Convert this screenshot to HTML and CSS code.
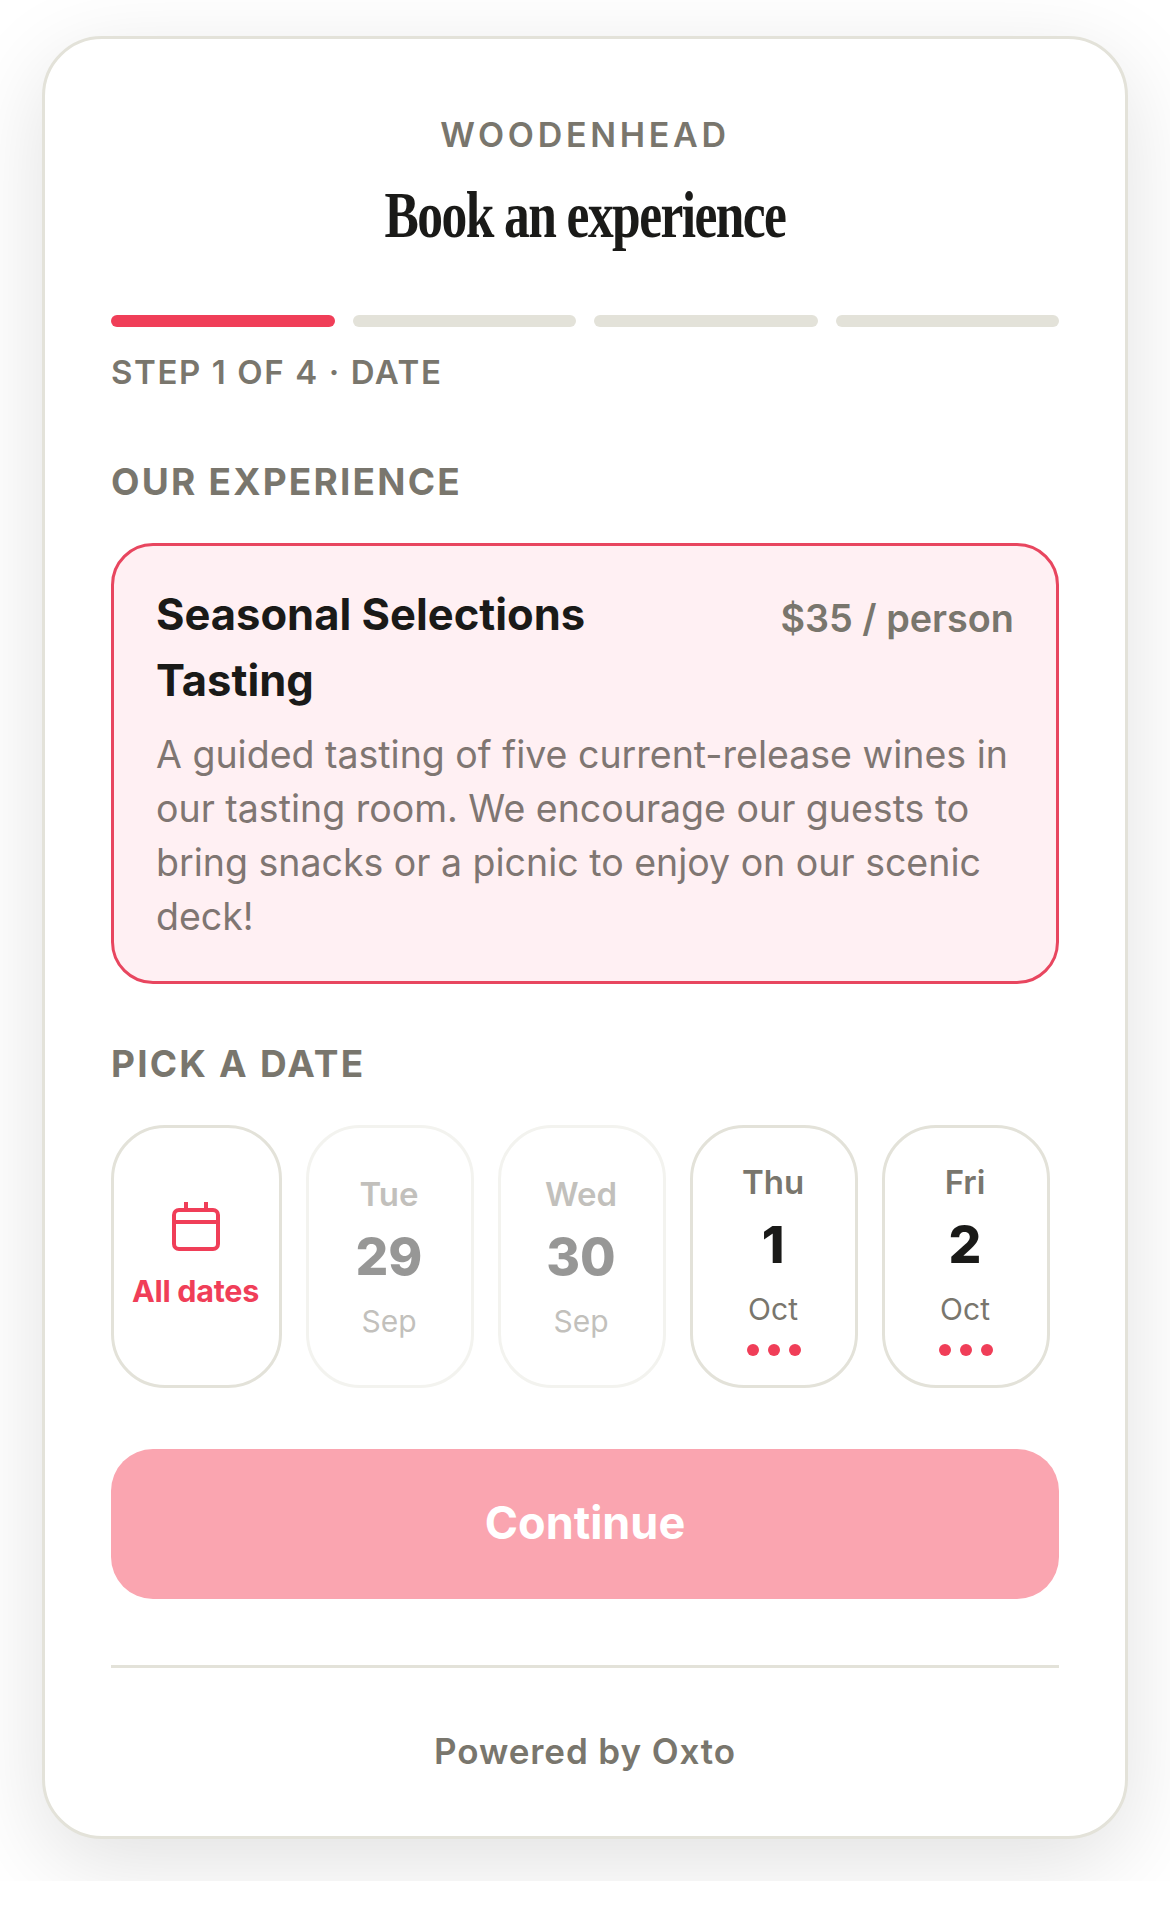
FILE: index.html
```html
<!DOCTYPE html>
<html lang="en">
<head>
    <meta charset="UTF-8">
    <title>Book an experience</title>
    <link rel="stylesheet" href="styles.css">
</head>
<body>
    <div class="stage">
        <main class="booking">
            <header class="brand">
                <p class="brand-name">WOODENHEAD</p>
                <h1 class="brand-title">Book an experience</h1>
            </header>

            <div class="progress">
                <span class="progress-bar active"></span>
                <span class="progress-bar"></span>
                <span class="progress-bar"></span>
                <span class="progress-bar"></span>
            </div>
            <p class="step-label">STEP 1 OF 4 · DATE</p>

            <h2 class="section-label">OUR EXPERIENCE</h2>
            <section class="experience">
                <div class="experience-head">
                    <h3 class="experience-name">Seasonal Selections Tasting</h3>
                    <span class="experience-price">$35 / person</span>
                </div>
                <p class="experience-text">A guided tasting of five current-release wines in our tasting room. We encourage our guests to bring snacks or a picnic to enjoy on our scenic deck!</p>
            </section>

            <h2 class="section-label date-label">PICK A DATE</h2>
            <div class="dates">
                <button class="date date-all" type="button">
                    <svg class="date-icon" viewBox="0 0 48 50" fill="none" stroke="currentColor" stroke-width="4" stroke-linejoin="round">
                        <rect x="2" y="9" width="44" height="39" rx="5"/>
                        <path d="M2 21h44M14 1v8M34 1v8"/>
                    </svg>
                    <span class="date-all-text">All dates</span>
                </button>
                <button class="date disabled" type="button">
                    <span class="date-day">Tue</span>
                    <span class="date-num">29</span>
                    <span class="date-month">Sep</span>
                </button>
                <button class="date disabled" type="button">
                    <span class="date-day">Wed</span>
                    <span class="date-num">30</span>
                    <span class="date-month">Sep</span>
                </button>
                <button class="date" type="button">
                    <span class="date-day">Thu</span>
                    <span class="date-num">1</span>
                    <span class="date-month">Oct</span>
                    <span class="dots"><i></i><i></i><i></i></span>
                </button>
                <button class="date" type="button">
                    <span class="date-day">Fri</span>
                    <span class="date-num">2</span>
                    <span class="date-month">Oct</span>
                    <span class="dots"><i></i><i></i><i></i></span>
                </button>
            </div>

            <button class="continue" type="button">Continue</button>

            <footer class="powered">Powered by Oxto</footer>
        </main>
    </div>
</body>
</html>
```

FILE: styles.css
```css
* {
    box-sizing: border-box;
}

body {
    margin: 0;
    background-color: #fff;
    font-family: 'Inter', sans-serif;
    color: #1a1a18;
}

h1, h2, h3, p {
    margin: 0;
}

.stage {
    height: 1881px;
    padding: 36px 42px 0;
    overflow: hidden;
    background-color: #fff;
}

.booking {
    height: 1803px;
    padding: 76px 66px 0;
    background-color: #fff;
    border: 3px solid #e3e2d9;
    border-radius: 60px;
    box-shadow: 0 24px 90px rgba(0, 0, 0, 0.12);
}

.brand {
    text-align: center;
}

.brand-name {
    font-size: 34px;
    line-height: 40px;
    font-weight: 600;
    letter-spacing: 3.7px;
    color: #79766d;
}

.brand-title {
    display: inline-block;
    margin-top: 20px;
    font-family: 'Liberation Serif', serif;
    font-size: 66px;
    line-height: 80px;
    font-weight: 700;
    letter-spacing: -2px;
    color: #1a1a18;
    transform: scaleX(0.78);
}

.progress {
    display: flex;
    gap: 18px;
    margin-top: 60px;
}

.progress-bar {
    flex: 1;
    height: 12px;
    background-color: #e3e2d9;
    border-radius: 6px;
}

.progress-bar.active {
    background-color: #f03e58;
}

.step-label {
    margin-top: 25px;
    font-size: 33px;
    line-height: 40px;
    font-weight: 600;
    letter-spacing: 1.6px;
    color: #79766d;
}

.section-label {
    margin-top: 68px;
    font-size: 37px;
    line-height: 44px;
    font-weight: 700;
    letter-spacing: 2.2px;
    color: #79766d;
}

.experience {
    margin-top: 39px;
    padding: 35px 42px 37px;
    background-color: #fff0f3;
    border: 3px solid #e8465f;
    border-radius: 42px;
}

.experience-head {
    display: flex;
    justify-content: space-between;
    align-items: flex-start;
    gap: 24px;
}

.experience-name {
    width: 480px;
    font-size: 43.5px;
    line-height: 66px;
    font-weight: 700;
}

.experience-price {
    flex-shrink: 0;
    margin-top: 4px;
    font-size: 37.8px;
    line-height: 66px;
    font-weight: 600;
    color: #79766d;
}

.experience-text {
    margin-top: 15px;
    font-size: 37.5px;
    line-height: 54px;
    color: #7f7672;
}

.date-label {
    margin-top: 58px;
}

.dates {
    display: flex;
    gap: 24px;
    margin-top: 39px;
}

.date {
    display: flex;
    flex-direction: column;
    align-items: center;
    justify-content: center;
    width: 168px;
    height: 263px;
    padding: 0 2px 0 0;
    font-family: inherit;
    background-color: #fff;
    border: 3px solid #e3e2d9;
    border-radius: 54px;
}

.date.disabled {
    border-color: #f3f3ef;
}

.date.disabled span {
    opacity: 0.45;
}

.date-all {
    width: 171px;
    padding: 0 2px 4px 0;
    color: #f03e58;
}

.date-icon {
    display: block;
    width: 48px;
    height: 50px;
}

.date-all-text {
    margin-top: 22px;
    font-size: 30.5px;
    line-height: 36px;
    font-weight: 700;
    letter-spacing: -0.3px;
}

.date-day {
    font-size: 33px;
    line-height: 40px;
    font-weight: 600;
    color: #79766d;
}

.date-num {
    margin-top: 11px;
    font-size: 51.5px;
    line-height: 62px;
    font-weight: 800;
    color: #1a1a18;
}

.date-month {
    margin-top: 15px;
    font-size: 30px;
    line-height: 38px;
    color: #79766d;
}

.dots {
    display: flex;
    gap: 9px;
    margin: 16px 0 -4px 2px;
}

.dots i {
    width: 12px;
    height: 12px;
    background-color: #f03e58;
    border-radius: 50%;
}

.continue {
    display: block;
    width: 100%;
    height: 150px;
    margin-top: 61px;
    padding: 0 0 3px;
    font-family: inherit;
    font-size: 45px;
    font-weight: 700;
    color: #fff;
    background-color: #faa5b0;
    border: none;
    border-radius: 42px;
}

.powered {
    margin-top: 66px;
    padding-top: 62px;
    border-top: 3px solid #e3e2d9;
    font-size: 35px;
    line-height: 42px;
    font-weight: 600;
    letter-spacing: 0.9px;
    text-align: center;
    color: #79766d;
}
```
